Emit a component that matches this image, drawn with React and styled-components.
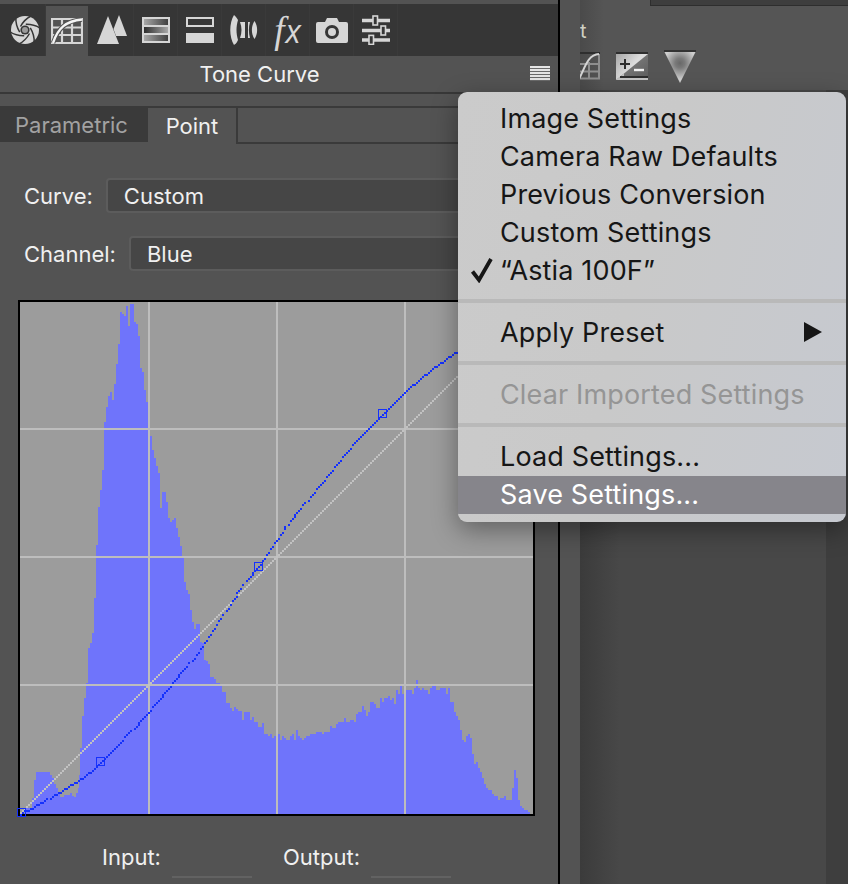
import React from 'react';
import styled, { createGlobalStyle } from 'styled-components';

const Global = createGlobalStyle`
  html, body { margin: 0; padding: 0; background: #535353; }
  body { width: 848px; height: 884px; overflow: hidden; font-family: Inter, "Liberation Sans", sans-serif; }
`;

const Page = styled.div`
  position: relative;
  width: 848px;
  height: 884px;
  overflow: hidden;
  display: flex;
  background: #535353;
`;
const Panel = styled.div`
  width: 558px;
  height: 884px;
  flex: none;
  display: flex;
  flex-direction: column;
  padding-top: 4px;
  box-sizing: border-box;
  background: #535353;
`;
const Divider = styled.div`
  width: 2px;
  flex: none;
  background: #000;
`;
const Strip = styled.div`
  width: 20px;
  flex: none;
  background: #535353;
`;
const Toolbar = styled.div`
  height: 52px;
  flex: none;
  display: flex;
  background: #363636;
  padding-left: 4px;
`;
const ToolBtn = styled.div`
  width: ${p => p.$w || 44}px;
  flex: none;
  box-sizing: border-box;
  display: flex;
  align-items: center;
  justify-content: center;
  margin-top: ${p => (p.$active ? 2 : 0)}px;
  padding-left: ${p => p.$nudge || 0}px;
  background: ${p => (p.$active ? '#535353' : 'transparent')};
  border-right: ${p => (p.$active ? 0 : '1px solid #3a3a3a')};
  svg { display: block; }
`;
const TitleBar = styled.div`
  height: 36px;
  flex: none;
  display: flex;
  align-items: center;
  justify-content: center;
  position: relative;
  font-size: 22px;
  color: #f0f0f0;
  border-bottom: 2px solid #383838;
  padding-right: 39px;
`;
const Burger = styled.div`
  position: absolute;
  right: 8px;
  top: 10px;
  width: 20px;
  height: 15px;
  background: repeating-linear-gradient(180deg, #e6e6e6 0 2px, #6a6a6a 2px 3px);
`;
const TabRow = styled.div`
  flex: none;
  display: flex;
  height: 36px;
  margin-top: 12px;
  border-top: 2px solid #3a3a3a;
`;
const Tab = styled.div`
  flex: none;
  width: ${p => p.$w}px;
  box-sizing: border-box;
  display: flex;
  align-items: center;
  justify-content: center;
  font-size: 22px;
  padding-right: ${p => (p.$active ? 0 : 5)}px;
  height: ${p => (p.$active ? 36 : 34)}px;
  color: ${p => (p.$active ? '#f0f0f0' : '#a2a2a2')};
  background: ${p => (p.$active ? '#535353' : '#3a3a3a')};
  border-right: ${p => (p.$active ? '2px solid #3a3a3a' : 0)};
`;
const TabRest = styled.div`
  flex: 1;
  border-bottom: 2px solid #3a3a3a;
`;
const Form = styled.div`
  flex: none;
  display: flex;
  flex-direction: column;
  gap: 23px;
  padding: 34px 24px 0 24px;
`;
const FieldRow = styled.div`
  display: flex;
  align-items: center;
  gap: 13px;
  height: 35px;
`;
const Label = styled.span`
  font-size: 22px;
  color: #f0f0f0;
`;
const Select = styled.div`
  flex: 1;
  height: 35px;
  box-sizing: border-box;
  background: #464646;
  border: 2px solid #5c5c5c;
  border-radius: 4px;
  display: flex;
  align-items: center;
  padding-left: 16px;
  font-size: 22px;
  color: #f0f0f0;
`;
const Frame = styled.div`
  flex: none;
  width: 513px;
  height: 512px;
  margin: 29px 0 0 18px;
  border: 2px solid #000;
  background: #9c9c9c;
  position: relative;
  svg { display: block; overflow: visible; position: absolute; left: 0; top: 0; }
`;
const IORow = styled.div`
  flex: none;
  display: flex;
  margin: 24px 0 0 102px;
  gap: 31px;
`;
const IOGroup = styled.div`
  display: flex;
  align-items: flex-start;
  gap: 11px;
`;
const IOLabel = styled.span`
  font-size: 22px;
  line-height: 34px;
  color: #f0f0f0;
`;
const IOField = styled.div`
  width: 80px;
  height: 38px;
  box-sizing: border-box;
  border-bottom: 2px solid #626262;
`;
const Side = styled.div`
  flex: 1;
  display: flex;
  flex-direction: column;
  overflow: hidden;
`;
const SideTop = styled.div`
  height: 90px;
  flex: none;
  background: linear-gradient(90deg, #4a4a4a, #555 24px);
  display: flex;
  flex-direction: column;
`;
const TopBox = styled.div`
  height: 6px;
  margin-left: 70px;
  flex: none;
  box-sizing: border-box;
  background: #3e3e3e;
  border-bottom: 1px solid #2e2e2e;
  border-left: 1px solid #2e2e2e;
`;
const CutText = styled.div`
  font-size: 20px;
  line-height: 24px;
  height: 24px;
  margin: 13px 0 0 0;
  color: #cfcfc2;
`;
const SideIcons = styled.div`
  display: flex;
  align-items: flex-start;
  margin-top: 9px;
  gap: 16px;
  svg { display: block; }
`;
const Prismed = styled.div`
  margin-top: -2px;
`;
const SideBody = styled.div`
  flex: 1;
  display: flex;
  background: #484848;
`;
const SideMain = styled.div`
  flex: 1;
  background: linear-gradient(90deg, #3b3b3b, #484848 40px);
`;
const SideEdge = styled.div`
  width: 22px;
  flex: none;
  background: #3e3e3e;
`;
const Menu = styled.div`
  position: absolute;
  left: 458px;
  top: 92px;
  width: 388px;
  height: 430px;
  box-sizing: border-box;
  padding-top: 7px;
  border-radius: 9px;
  overflow: hidden;
  font-size: 27px;
  letter-spacing: 0.15px;
  color: #161616;
  background: linear-gradient(105deg, #cbcbcb 0%, #c9c9c9 45%, #c6c9d0 100%);
`;
const MenuShadow = styled.div`
  position: absolute;
  left: 458px;
  top: 92px;
  width: 388px;
  height: 430px;
  border-radius: 9px;
  box-shadow: 0 8px 26px rgba(0, 0, 0, 0.38);
`;
const Item = styled.div`
  height: 38px;
  box-sizing: border-box;
  padding: ${p => (p.$hot ? '0 24px 2px 42px' : '0 24px 0 42px')};
  margin-top: ${p => (p.$hot ? 1 : 0)}px;
  display: flex;
  align-items: center;
  justify-content: space-between;
  position: relative;
  white-space: nowrap;
  color: ${p => (p.$hot ? '#fff' : p.$off ? '#959595' : '#161616')};
  background: ${p => (p.$hot ? '#86858b' : 'transparent')};
  svg { display: block; }
`;
const Tick = styled.svg`
  position: absolute;
  left: 12px;
  top: 6px;
`;
const Sep = styled.div`
  height: 24px;
  display: flex;
  align-items: center;
  &::before { content: ''; display: block; width: 100%; height: 4px; background: #b9b9b9; }
`;

const L = '#d6d6d6';
const D = '#363636';

const Aperture = () => (
  <svg width="30" height="30" viewBox="0 0 30 30">
    <circle cx="15" cy="15" r="14" fill={L} />
    {[0, 60, 120, 180, 240, 300].map(a => (
      <path key={a} transform={`rotate(${a} 15 15)`} d="M10.5 11.5 C13 7 17 3 21 1" fill="none" stroke={D} strokeWidth="1.5" />
    ))}
    <circle cx="15" cy="15" r="4.6" fill={D} />
    <circle cx="15" cy="15" r="3" fill="#9a9a9a" />
  </svg>
);
const GridCurve = () => (
  <svg width="32" height="26" viewBox="0 0 32 26">
    <path d="M1 1H31V25H1Z M1 9.5H31 M1 17H31 M11 1V25 M21 1V25" fill="none" stroke={L} strokeWidth="2.2" />
    <path d="M2 25 C7 10 15 3 31 1.5" fill="none" stroke="#535353" strokeWidth="4.5" />
    <path d="M2 25 C7 10 15 3 31 1.5" fill="none" stroke="#f4f4f4" strokeWidth="2.4" />
  </svg>
);
const Peaks = () => (
  <svg width="32" height="30" viewBox="0 0 32 30">
    <path d="M12 1 L23 29 H1 Z" fill={L} />
    <path d="M23 0 L31 21 H20 L17.5 14 Z" fill={L} />
  </svg>
);
const HslBox = () => (
  <svg width="28" height="26" viewBox="0 0 28 26">
    <defs>
      <linearGradient id="g1"><stop offset="0" stopColor="#a8a8a8" /><stop offset="1" stopColor="#404040" /></linearGradient>
      <linearGradient id="g2"><stop offset="0" stopColor="#2e2e2e" /><stop offset="1" stopColor="#a8a8a8" /></linearGradient>
    </defs>
    <rect x="1" y="1" width="26" height="24" fill="#363636" stroke={L} strokeWidth="2" />
    <rect x="2" y="2" width="24" height="6" fill="url(#g1)" />
    <rect x="2" y="8" width="24" height="2" fill={L} />
    <rect x="2" y="10" width="24" height="6" fill="url(#g2)" />
    <rect x="2" y="16" width="24" height="2" fill={L} />
    <rect x="2" y="18" width="24" height="6" fill="url(#g1)" />
  </svg>
);
const Split = () => (
  <svg width="28" height="26" viewBox="0 0 28 26">
    <rect x="1" y="1" width="26" height="8" fill="none" stroke={L} strokeWidth="2" />
    <rect x="0" y="16" width="28" height="10" fill={L} />
  </svg>
);
const Lens = () => (
  <svg width="28" height="30" viewBox="0 0 28 30">
    <path d="M4 0 C-1 8 -1 22 4 30 C7 28 7 27 8 25 C6 18 6 12 8 5 C7 3 6 2 4 0Z" fill={L} />
    <path d="M10 7 H15 V23 H10 C12 18 12 12 10 7Z" fill={L} />
    <path d="M18 7 H20 C18.5 12 18.5 18 20 23 H18 Z" fill={L} />
    <path d="M24.5 6 C28 11 28 19 24.5 24 C21 19 21 11 24.5 6Z" fill={L} />
  </svg>
);
const FxWrap = styled.span`
  display: inline-flex;
  align-items: baseline;
  color: ${L};
  line-height: 1;
`;
const FxF = styled.span`
  font-family: "Liberation Serif", serif;
  font-style: italic;
  font-size: 37px;
`;
const FxX = styled.span`
  font-family: "Open Sans", sans-serif;
  font-style: italic;
  font-size: 32px;
  margin-left: 1px;
`;
const Camera = () => (
  <svg width="32" height="26" viewBox="0 0 32 26">
    <path d="M2 5 H9 L11 1 H21 L23 5 H30 Q32 5 32 7 V24 Q32 26 30 26 H2 Q0 26 0 24 V7 Q0 5 2 5Z" fill={L} />
    <circle cx="16" cy="15" r="7" fill={D} />
    <circle cx="16" cy="15" r="4" fill={L} />
  </svg>
);
const Sliders = () => (
  <svg width="28" height="30" viewBox="0 0 28 30">
    <path d="M0 5.5H28 M0 15.5H28 M0 25H28" stroke={L} strokeWidth="3.4" />
    <rect x="11" y="1" width="4.5" height="9" fill={D} stroke={L} strokeWidth="1.6" />
    <rect x="19" y="11" width="4.5" height="9" fill={D} stroke={L} strokeWidth="1.6" />
    <rect x="7" y="20.4" width="4.5" height="9" fill={D} stroke={L} strokeWidth="1.6" />
  </svg>
);
const SideCurve = () => (
  <svg width="20" height="28" viewBox="0 0 20 28">
    <rect x="0" y="0" width="20" height="2" fill="#2e2e2e" />
    <path d="M0 26.5H19V2 M0 12H19 M0 19.5H19 M9 10V26" fill="none" stroke="#8e8e8e" strokeWidth="2" />
    <path d="M-1 27 C5 16 7 3 19 2" fill="none" stroke="#d4d4d4" strokeWidth="2" />
  </svg>
);
const PlusMinus = () => (
  <svg width="32" height="28" viewBox="0 0 32 28">
    <defs>
      <linearGradient id="pm" x1="0" y1="0" x2="1" y2="0.7"><stop offset="0" stopColor="#a6a6a6" /><stop offset="0.55" stopColor="#dcdcdc" /></linearGradient>
      <linearGradient id="pn" x1="0" y1="0" x2="1" y2="1"><stop offset="0" stopColor="#8a8a8a" /><stop offset="1" stopColor="#5c5c5c" /></linearGradient>
    </defs>
    <rect x="0" y="2" width="32" height="26" fill="url(#pm)" />
    <path d="M0 28 L32 2 V28Z" fill="url(#pn)" />
    <rect x="0" y="0" width="32" height="2" fill="#2e2e2e" />
    <path d="M4 12H14 M9 7V17" stroke="#2e2e2e" strokeWidth="2" />
    <path d="M18 18H28" stroke="#f0f0f0" strokeWidth="2.4" />
    <path d="M0 28 L8 21.5 V24 H32 V28Z" fill="#c4c4c4" />
    <rect x="4" y="24" width="28" height="2" fill="#2e2e2e" />
  </svg>
);
const Prism = () => (
  <svg width="32" height="33" viewBox="0 0 32 33">
    <defs>
      <radialGradient id="pr" cx="0.5" cy="0.38" r="0.5"><stop offset="0" stopColor="#686868" /><stop offset="0.3" stopColor="#7a7a7a" /><stop offset="1" stopColor="#cfcfcf" /></radialGradient>
    </defs>
    <path d="M0 1 H32 L16 33Z" fill="url(#pr)" />
    <rect x="0" y="0" width="32" height="2" fill="#333" />
  </svg>
);

const HIST = [[0,812],[26,808],[32,798],[34,780],[36,772],[50,775],[52,778],[54,784],[56,788],[58,793],[60,797],[64,795],[70,793],[72,796],[74,797],[76,793],[78,788],[79,775],[80,748],[82,716],[84,698],[86,683],[88,648],[90,643],[92,633],[94,598],[96,545],[98,507],[100,490],[102,470],[104,422],[106,407],[108,396],[110,392],[112,400],[114,384],[116,364],[118,344],[120,312],[122,314],[124,316],[126,306],[128,326],[130,304],[134,322],[136,324],[138,336],[140,368],[142,372],[144,390],[146,402],[148,420],[150,436],[152,450],[154,458],[156,466],[158,473],[160,508],[162,492],[164,492],[166,502],[168,518],[170,522],[172,520],[174,518],[176,528],[178,537],[180,546],[182,557],[184,582],[186,590],[188,594],[190,610],[192,622],[194,629],[196,624],[198,624],[200,642],[202,643],[204,660],[206,661],[208,664],[210,677],[212,677],[214,679],[216,683],[220,686],[222,692],[226,703],[230,708],[232,711],[234,707],[236,709],[238,711],[242,720],[244,712],[248,712],[250,720],[252,717],[254,722],[258,727],[262,723],[264,734],[268,736],[270,734],[272,738],[274,736],[278,734],[280,740],[282,736],[284,738],[286,740],[290,736],[292,734],[294,740],[296,730],[298,736],[300,738],[302,740],[304,738],[306,736],[310,734],[316,732],[322,734],[324,732],[330,726],[332,728],[336,724],[338,722],[344,718],[346,722],[350,720],[354,722],[356,714],[358,712],[362,706],[364,710],[366,716],[368,712],[370,702],[374,704],[376,708],[380,698],[382,702],[384,698],[388,696],[390,700],[392,698],[394,704],[396,690],[398,694],[400,686],[402,694],[404,688],[406,690],[412,694],[414,688],[416,680],[418,688],[420,690],[422,688],[424,690],[428,694],[430,688],[432,686],[436,690],[440,688],[446,694],[448,688],[450,702],[454,712],[456,716],[458,720],[460,730],[462,740],[464,742],[466,736],[468,734],[470,738],[472,754],[474,764],[476,762],[478,768],[480,772],[482,778],[484,784],[486,788],[488,790],[492,794],[494,796],[498,800],[500,798],[504,796],[506,800],[512,788],[514,770],[516,778],[518,800],[520,806],[522,808],[524,810],[528,812],[530,814]];
const OX = 20, OY = 302;
const histPath = () => {
  let d = `M0 512`;
  HIST.forEach(([x, y], i) => {
    const px = Math.max(0, x - OX), py = y - OY;
    d += `L${px} ${i === 0 ? 512 : py}`;
    const nx = i + 1 < HIST.length ? Math.max(0, HIST[i + 1][0] - OX) : 513;
    d += `L${nx} ${py}`;
  });
  d += 'L513 512Z';
  return d;
};
const CURVE = [[20,813],[60,791],[100,762],[149,710],[170,685],[200,648],[240,588],[258,566],[278,537],[290,520],[320,484],[350,447],[382,413],[420,378],[458,350],[495,326],[533,305]];
const curvePixels = () => {
  const out = [];
  const pts = CURVE;
  for (let i = 0; i < pts.length - 1; i++) {
    const p0 = pts[Math.max(0, i - 1)], p1 = pts[i], p2 = pts[i + 1], p3 = pts[Math.min(pts.length - 1, i + 2)];
    const steps = Math.ceil((p2[0] - p1[0]) / 2);
    for (let s = 0; s < steps; s++) {
      const t = s / steps;
      const f = k => 0.5 * (2 * p1[k] + (p2[k] - p0[k]) * t + (2 * p0[k] - 5 * p1[k] + 4 * p2[k] - p3[k]) * t * t + (3 * p1[k] - p0[k] - 3 * p2[k] + p3[k]) * t * t * t);
      out.push([Math.round(f(0) / 2) * 2 - OX, Math.round(f(1) / 2) * 2 - OY]);
    }
  }
  return out;
};
const diag = Array.from({ length: 256 }, (_, i) => [i * 2, 510 - i * 2]);

const Chart = () => (
  <svg width="513" height="512" viewBox="0 0 513 512" shapeRendering="crispEdges">
    <path d={histPath()} fill="#6f74fb" />
    {[128, 256, 384].map(v => <rect key={v} x={v} y="0" width="2" height="512" fill="#bdbdbd" />)}
    {[126, 254, 382].map(v => <rect key={v} x="0" y={v} width="513" height="2" fill="#bdbdbd" />)}
    {diag.map(([x, y]) => <rect key={x} x={x} y={y} width="2" height="2" fill="#c2c2c2" />)}
    {curvePixels().map(([x, y], i) => <rect key={i} x={x} y={y} width="2" height="2" fill="#1531fb" />)}
    {[[1, 510], [80, 459], [238, 264], [362, 111]].map(([x, y]) => (
      <rect key={x} x={x - 4} y={y - 4} width="8" height="8" fill="none" stroke="#1531fb" strokeWidth="1" />
    ))}
  </svg>
);

const items = ['Image Settings', 'Camera Raw Defaults', 'Previous Conversion', 'Custom Settings'];

export default function App() {
  return (
    <Page>
      <Global />
      <Panel>
        <Toolbar>
          <ToolBtn $w={42}><Aperture /></ToolBtn>
          <ToolBtn $w={42} $active><GridCurve /></ToolBtn>
          <ToolBtn $w={46} $nudge={3}><Peaks /></ToolBtn>
          <ToolBtn><HslBox /></ToolBtn>
          <ToolBtn><Split /></ToolBtn>
          <ToolBtn><Lens /></ToolBtn>
          <ToolBtn><FxWrap><FxF>f</FxF><FxX>x</FxX></FxWrap></ToolBtn>
          <ToolBtn><Camera /></ToolBtn>
          <ToolBtn><Sliders /></ToolBtn>
        </Toolbar>
        <TitleBar>Tone Curve<Burger /></TitleBar>
        <TabRow>
          <Tab $w={148}>Parametric</Tab>
          <Tab $w={90} $active>Point</Tab>
          <TabRest />
        </TabRow>
        <Form>
          <FieldRow><Label>Curve:</Label><Select>Custom</Select></FieldRow>
          <FieldRow><Label>Channel:</Label><Select>Blue</Select></FieldRow>
        </Form>
        <Frame><Chart /></Frame>
        <IORow>
          <IOGroup><IOLabel>Input:</IOLabel><IOField /></IOGroup>
          <IOGroup><IOLabel>Output:</IOLabel><IOField /></IOGroup>
        </IORow>
      </Panel>
      <Divider />
      <Strip />
      <Side>
        <SideTop>
          <TopBox />
          <CutText>t</CutText>
          <SideIcons>
            <SideCurve />
            <PlusMinus />
            <Prismed><Prism /></Prismed>
          </SideIcons>
        </SideTop>
        <SideBody>
          <SideMain />
          <SideEdge />
        </SideBody>
      </Side>
      <MenuShadow />
      <Menu>
        {items.map(t => <Item key={t}>{t}</Item>)}
        <Item>
          <Tick width="24" height="26" viewBox="0 0 24 26"><path d="M2.5 14.5 L9 23 L21 2" fill="none" stroke="#161616" strokeWidth="3.8" /></Tick>
          “Astia 100F”
        </Item>
        <Sep />
        <Item>Apply Preset<svg width="18" height="20" viewBox="0 0 18 20"><path d="M0 0 L18 10 L0 20Z" fill="#161616" /></svg></Item>
        <Sep />
        <Item $off>Clear Imported Settings</Item>
        <Sep />
        <Item>Load Settings...</Item>
        <Item $hot>Save Settings...</Item>
      </Menu>
    </Page>
  );
}
